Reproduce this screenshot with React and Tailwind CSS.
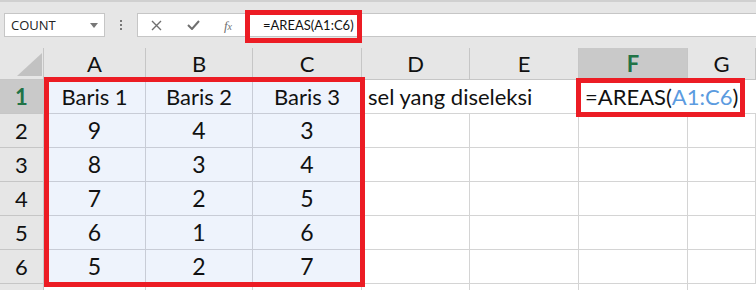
import React from "react"

const cols = ["A", "B", "C", "D", "E", "F", "G"]
const data = [
  ["Baris 1", "Baris 2", "Baris 3"],
  ["9", "4", "3"],
  ["8", "3", "4"],
  ["7", "2", "5"],
  ["6", "1", "6"],
  ["5", "2", "7"],
]

const App = () => {
  return (
    <div className="relative w-[756px] h-[290px] overflow-hidden bg-white font-['Lato',sans-serif] text-[#111]">
      {/* Toolbar: name box + formula bar */}
      <div className="h-[48px] bg-[#e6e6e6] border-t-[2px] border-[#d0d0d0] flex items-start pt-[11px]">
        <div className="shrink-0 ml-[4px] w-[101px] h-[24px] bg-white border border-[#c6c6c6] flex items-center justify-between pl-[6px] pr-[6px]">
          <span className="font-['Open_Sans',sans-serif] text-[13px] text-[#222] leading-none">COUNT</span>
          <svg width="8" height="5" viewBox="0 0 8 5">
            <path d="M0 0 L8 0 L4 5 Z" fill="#777" />
          </svg>
        </div>
        <div className="shrink-0 w-[32px] h-[24px] flex flex-col items-center justify-center gap-[2px]">
          <div className="w-[2px] h-[2px] bg-[#777]"></div>
          <div className="w-[2px] h-[2px] bg-[#777]"></div>
          <div className="w-[2px] h-[2px] bg-[#777]"></div>
        </div>
        <div className="flex-1 h-[24px] bg-white border-y border-l border-[#c6c6c6] flex items-center">
          <div className="shrink-0 w-[36px] flex justify-center">
            <svg width="11" height="11" viewBox="0 0 11 11">
              <path d="M1 1 L10 10 M10 1 L1 10" stroke="#6f6f6f" strokeWidth="1.4" />
            </svg>
          </div>
          <div className="shrink-0 w-[38px] flex justify-center">
            <svg width="13" height="10" viewBox="0 0 13 10">
              <path d="M1 5 L5 9 L12 1" stroke="#6f6f6f" strokeWidth="2" fill="none" />
            </svg>
          </div>
          <div className="shrink-0 w-[32px] flex justify-center">
            <span className="font-['Liberation_Serif',serif] italic text-[13px] text-[#6f6f6f] leading-none">
              f<span className="text-[10px]">x</span>
            </span>
          </div>
          <span className="shrink-0 pl-[19px] text-[13px] text-[#111] leading-none">=AREAS(A1:C6)</span>
        </div>
      </div>

      {/* Sheet grid */}
      <div className="grid grid-cols-[44px_102px_107px_109px_108px_109px_109px_68px] grid-rows-[32px_34px_34px_34px_34px_34px_34px_34px]">
        {/* Corner */}
        <div className="bg-[#e6e6e6] border-r border-b border-[#c6c6c6] flex items-end justify-end pr-[1px] pb-[3px]">
          <svg width="25" height="23" viewBox="0 0 25 23">
            <path d="M25 0 L25 23 L0 23 Z" fill="#c2c2c2" />
          </svg>
        </div>
        {cols.map((c) => (
          <div
            key={c}
            className={
              c === "F"
                ? "bg-[#c9c9c9] border-r border-b border-[#c6c6c6] flex items-center justify-center text-[22px] font-bold text-[#217346]"
                : "bg-[#e6e6e6] border-r border-b border-[#c6c6c6] flex items-center justify-center text-[22px] text-[#111]"
            }
          >
            {c}
          </div>
        ))}

        {/* Row 1 */}
        <div className="bg-[#c9c9c9] border-r border-b border-[#c6c6c6] flex items-center justify-center text-[22px] font-bold text-[#217346]">
          1
        </div>
        {data[0].map((v, i) => (
          <div
            key={i}
            className="bg-[#eef3fc] border-r border-b border-[#c8ccd6] flex items-center justify-center text-[22px]"
          >
            {v}
          </div>
        ))}
        <div className="col-span-2 border-r border-b border-[#d4d4d4] flex items-center pl-[6px] text-[22px] whitespace-nowrap">
          sel yang diseleksi
        </div>
        <div className="col-span-2 border-b border-[#d4d4d4] flex items-center pl-[6px] text-[22px] whitespace-nowrap">
          =AREAS(<span className="text-[#5b9be0]">A1:C6</span>)
        </div>

        {/* Rows 2-6 */}
        {data.slice(1).map((row, r) => (
          <React.Fragment key={r}>
            <div className="bg-[#e6e6e6] border-r border-b border-[#c6c6c6] flex items-center justify-center text-[22px]">
              {r + 2}
            </div>
            {row.map((v, i) => (
              <div
                key={i}
                className="bg-[#eef3fc] border-r border-b border-[#c8ccd6] flex items-center justify-center text-[23px]"
              >
                {v}
              </div>
            ))}
            <div className="border-r border-b border-[#d4d4d4]"></div>
            <div className="border-r border-b border-[#d4d4d4]"></div>
            <div className="border-r border-b border-[#d4d4d4]"></div>
            <div className="border-r border-b border-[#d4d4d4]"></div>
          </React.Fragment>
        ))}

        {/* Row 7 (cut off) */}
        <div className="bg-[#e6e6e6] border-r border-[#c6c6c6]"></div>
        <div className="border-r border-[#d4d4d4]"></div>
        <div className="border-r border-[#d4d4d4]"></div>
        <div className="border-r border-[#d4d4d4]"></div>
        <div className="border-r border-[#d4d4d4]"></div>
        <div className="border-r border-[#d4d4d4]"></div>
        <div className="border-r border-[#d4d4d4]"></div>
        <div></div>
      </div>

      {/* Red annotation boxes */}
      <div className="absolute left-[245px] top-[10px] w-[117px] h-[33px] border-[5px] border-[#ec1c24]"></div>
      <div className="absolute left-[44px] top-[77px] w-[321px] h-[210px] border-[5px] border-[#ec1c24]"></div>
      <div className="absolute left-[576px] top-[78px] w-[169px] h-[39px] border-[5px] border-[#ec1c24]"></div>
    </div>
  )
}

export default App
